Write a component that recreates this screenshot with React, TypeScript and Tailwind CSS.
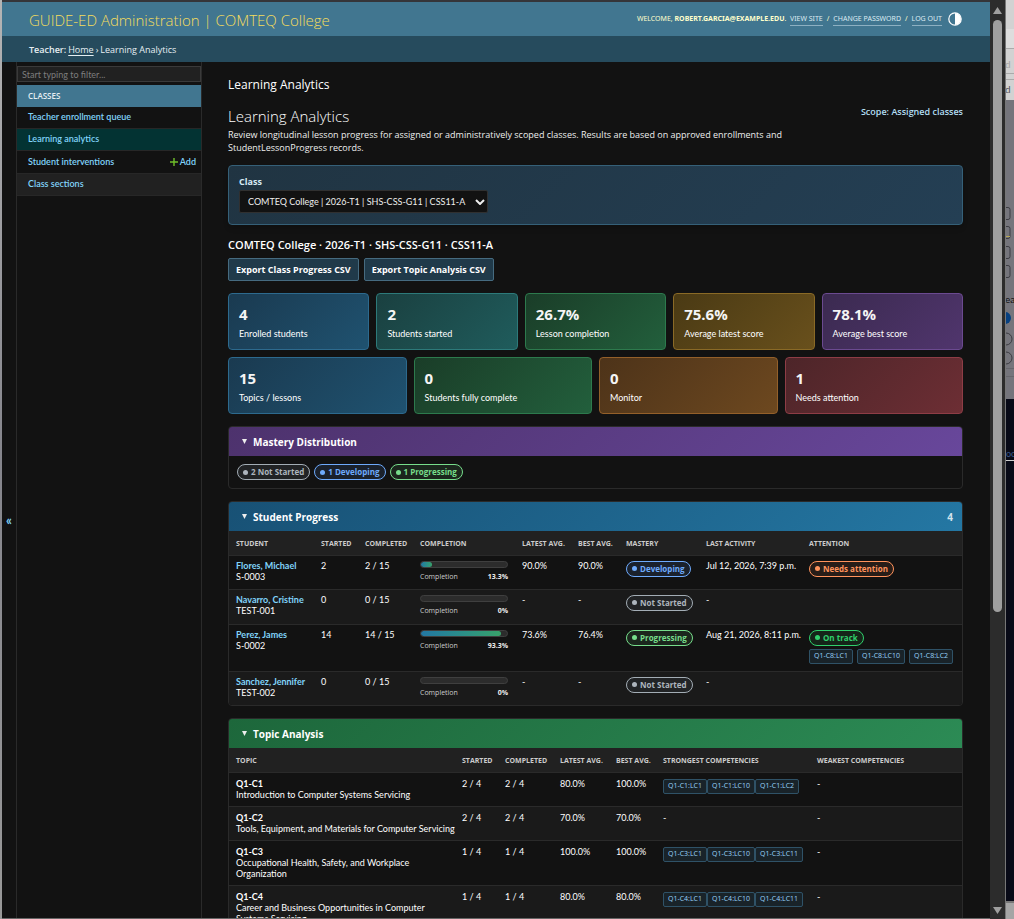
import React from 'react';

type Tone = 'blue' | 'teal' | 'green' | 'gold' | 'purple' | 'orange' | 'red';
type BadgeTone = 'gray' | 'blue' | 'lime' | 'green' | 'orange';

const TONES: Record<Tone, string> = {
    blue: 'border-[#2d6a8e] from-[#1a3a50] to-[#1f5270]',
    teal: 'border-[#2d7a7a] from-[#1a4040] to-[#1f5c5c]',
    green: 'border-[#2d7a4d] from-[#1a3d28] to-[#225f3c]',
    gold: 'border-[#8a6a26] from-[#4a3a14] to-[#69501c]',
    purple: 'border-[#6b4a90] from-[#3b2a50] to-[#50356d]',
    orange: 'border-[#94602a] from-[#4d3319] to-[#6d481f]',
    red: 'border-[#8e3d46] from-[#4d2529] to-[#6d2e34]',
};

const BADGES: Record<BadgeTone, string> = {
    gray: 'border-[#a3adb5] text-[#adb5bd] bg-[#212325]',
    blue: 'border-[#6eaafc] text-[#6eaafc] bg-[#1a212c]',
    lime: 'border-[#77dd8b] text-[#77dd8b] bg-[#1b261d]',
    green: 'border-[#30cf6c] text-[#30cf6c] bg-[#152419]',
    orange: 'border-[#ff935c] text-[#ff935c] bg-[#271d18]',
};

const firstStats: { value: string; label: string; tone: Tone }[] = [
    { value: '4', label: 'Enrolled students', tone: 'blue' },
    { value: '2', label: 'Students started', tone: 'teal' },
    { value: '26.7%', label: 'Lesson completion', tone: 'green' },
    { value: '75.6%', label: 'Average latest score', tone: 'gold' },
    { value: '78.1%', label: 'Average best score', tone: 'purple' },
];

const secondStats: { value: string; label: string; tone: Tone }[] = [
    { value: '15', label: 'Topics / lessons', tone: 'blue' },
    { value: '0', label: 'Students fully complete', tone: 'green' },
    { value: '0', label: 'Monitor', tone: 'orange' },
    { value: '1', label: 'Needs attention', tone: 'red' },
];

const students = [
    { name: 'Flores, Michael', id: 'S-0003', started: 2, percent: 13.3, latest: '90.0%', best: '90.0%', mastery: 'Developing', tone: 'blue' as BadgeTone, last: 'Jul 12, 2026, 7:39 p.m.', attention: 'Needs attention', codes: [] as string[], height: 'h-[34px]' },
    { name: 'Navarro, Cristine', id: 'TEST-001', started: 0, percent: 0, latest: '-', best: '-', mastery: 'Not Started', tone: 'gray' as BadgeTone, last: '-', attention: '', codes: [], height: 'h-[35px]' },
    { name: 'Perez, James', id: 'S-0002', started: 14, percent: 93.3, latest: '73.6%', best: '76.4%', mastery: 'Progressing', tone: 'lime' as BadgeTone, last: 'Aug 21, 2026, 8:11 p.m.', attention: 'On track', codes: ['Q1-C8:LC1', 'Q1-C8:LC10', 'Q1-C8:LC2'], height: 'h-[47px]' },
    { name: 'Sanchez, Jennifer', id: 'TEST-002', started: 0, percent: 0, latest: '-', best: '-', mastery: 'Not Started', tone: 'gray' as BadgeTone, last: '-', attention: '', codes: [], height: 'h-[34px]' },
];

const topics = [
    { code: 'Q1-C1', title: 'Introduction to Computer Systems Servicing', count: '2 / 4', latest: '80.0%', best: '100.0%', strongest: ['Q1-C1:LC1', 'Q1-C1:LC10', 'Q1-C1:LC2'] },
    { code: 'Q1-C2', title: 'Tools, Equipment, and Materials for Computer Servicing', count: '2 / 4', latest: '70.0%', best: '70.0%', strongest: [] },
    { code: 'Q1-C3', title: 'Occupational Health, Safety, and Workplace Organization', count: '1 / 4', latest: '100.0%', best: '100.0%', strongest: ['Q1-C3:LC1', 'Q1-C3:LC10', 'Q1-C3:LC11'] },
    { code: 'Q1-C4', title: 'Career and Business Opportunities in Computer Systems Servicing', count: '1 / 4', latest: '80.0%', best: '80.0%', strongest: ['Q1-C4:LC1', 'Q1-C4:LC10', 'Q1-C4:LC11'] },
];

const OPEN = "font-['Open_Sans','Noto_Sans',sans-serif]";

const StatCard = ({ value, label, tone }: { value: string; label: string; tone: Tone }) => (
    <div className={`h-[57px] rounded-[4px] border bg-linear-135 px-[10px] pt-[10px] ${TONES[tone]}`}>
        <div className={`text-[15px] leading-5 font-bold text-[#f5f5f5] ${OPEN}`}>{value}</div>
        <div className="mt-1 leading-3 text-white">{label}</div>
    </div>
);

const Badge = ({ tone, children }: { tone: BadgeTone; children: React.ReactNode }) => (
    <span className={`inline-flex h-4 items-center gap-[3px] rounded-full border px-[5px] align-top text-[8px] font-bold whitespace-nowrap ${OPEN} ${BADGES[tone]}`}>
        <span className="size-[5px] rounded-full bg-current" />
        {children}
    </span>
);

const Code = ({ children }: { children: React.ReactNode }) => (
    <span className={`inline-flex h-[15px] items-center rounded-[2px] border border-[#2f5267] bg-[#192329] px-1 text-[7px] whitespace-nowrap text-[#9ad4fb] ${OPEN}`}>
        {children}
    </span>
);

const Progress = ({ percent }: { percent: number }) => (
    <div className={OPEN}>
        <div className="h-[7px] overflow-hidden rounded-full border border-[#3f3f3f] bg-[#2c2c2c]">
            <div className="h-full rounded-full bg-linear-to-r from-[#2477a3] to-[#38a169]" style={{ width: `${percent}%` }} />
        </div>
        <div className="mt-1 flex justify-between text-[7px] leading-[10px] text-[#cccccc]">
            <span>Completion</span>
            <strong className="text-[#eeeeee]">{percent}%</strong>
        </div>
    </div>
);

const Panel = ({ title, tone, count, children }: { title: string; tone: string; count?: number; children: React.ReactNode }) => (
    <details open className="mt-3 overflow-hidden rounded-[4px] border border-[#2a2a2a]">
        <summary className={`flex h-[29px] cursor-pointer list-none items-center bg-linear-135 px-[13px] text-[10px] leading-[14px] font-bold text-white ${OPEN} ${tone}`}>
            <svg viewBox="0 0 6 6" className="mr-[6px] size-[5px] fill-[#eeeeee]"><path d="M0 0h6L3 6z" /></svg>
            {title}
            {count !== undefined && <span className="mr-[-4px] ml-auto text-[#d3e4ed]">{count}</span>}
        </summary>
        {children}
    </details>
);

const TH = `px-[7px] pt-[2px] text-left text-[7px] font-bold whitespace-nowrap text-[#cccccc] ${OPEN}`;
const TD = 'px-[7px] pt-[5px] align-top';
const TEXT_TD = 'px-[7px] pt-1 align-top whitespace-nowrap';

// Slice of the window that sits behind the browser, visible along its right edge
const BackWindow = () => (
    <div className="flex w-[9px] shrink-0 flex-col overflow-hidden border-l border-[#777777] bg-[#080a17]">
        <svg width="8" height="399" className="shrink-0" fill="none" stroke="#3c3c42">
            <rect width="8" height="399" fill="#75757c" stroke="none" />
            <rect width="8" height="100" fill="#d2d2d2" stroke="none" />
            <rect width="8" height="19" y="29" fill="#dddddd" stroke="none" />
            <path d="M0 48.500h8M0 73.500h8M0 79.500h8" stroke="#aaaaaa" />
            <text x="-1" y="68" fontSize="10" fill="#a5a5a5" stroke="none">d</text>
            <text x="-1" y="93" fontSize="10" fill="#55555c" stroke="none">d</text>
            <path d="M0 207.500h2a2 2 0 0 1 2 2v8a2 2 0 0 1-2 2H0M0 226.500h2a2 2 0 0 1 2 2v8a2 2 0 0 1-2 2H0M0 246.500h2a2 2 0 0 1 2 2v8a2 2 0 0 1-2 2H0M0 265.500h2a2 2 0 0 1 2 2v8a2 2 0 0 1-2 2H0" />
            <path d="M0 236.500h4" stroke="#b5a655" />
            <text x="-1" y="303" fontSize="10" fill="#111111" stroke="none">ea</text>
            <circle cx="-1" cy="318" r="6" fill="#064080" stroke="none" />
            <path d="M0 333a6 6 0 0 1 0 12M0 352a6 6 0 0 1 0 12" />
            <path d="M0 368.500h8M0 376.500h8" stroke="#66666c" />
        </svg>
        <div className="mt-[49px] border-b border-[#cccccc] text-[9px] leading-3 text-[#3c5a8a]">oc</div>
        <div className="mt-auto h-[18px] border-t-2 border-[#777777] bg-[#a5a5a5]" />
    </div>
);

const App = () => (
    <div className="flex h-screen overflow-hidden bg-linear-to-b from-[#b5b5b5] via-[#85858c] to-[#999999] pl-[2px] font-[Lato,'Noto_Sans',sans-serif] text-[9px] leading-3 text-white">
        <div className="flex min-w-0 flex-1 flex-col border-t-2 border-b border-t-[#353539] border-b-[#666666] bg-[#121212]">
            <header className="flex h-[34px] shrink-0 items-center justify-between bg-[#417690] pr-7 pl-[27px]">
                <h1 className={`pt-[1px] text-[15px] font-light text-[#f5dd5d] ${OPEN}`}>GUIDE-ED Administration | COMTEQ College</h1>
                <div className="flex items-center font-['Noto_Sans',sans-serif] text-[7px] text-[#ffffcc]">
                    <span>WELCOME, <strong>ROBERT.GARCIA@EXAMPLE.EDU</strong>.&nbsp;&nbsp;</span>
                    <a href="#" className="border-b border-[#8db0c2] text-[#dcebf2]">VIEW SITE</a>
                    <span className="px-1">/</span>
                    <a href="#" className="border-b border-[#8db0c2] text-[#dcebf2]">CHANGE PASSWORD</a>
                    <span className="px-1">/</span>
                    <a href="#" className="border-b border-[#8db0c2] text-[#dcebf2]">LOG OUT</a>
                    <button aria-label="Toggle theme" className="ml-[6px]">
                        <svg viewBox="0 0 14 14" className="size-[14px]"><circle cx="7" cy="7" r="6.2" fill="none" stroke="white" strokeWidth="1.2" /><path d="M7 1a6 6 0 0 1 0 12z" fill="white" /></svg>
                    </button>
                </div>
            </header>
            <nav className={`flex h-[26px] shrink-0 items-center gap-[2px] bg-[#264b5d] pt-[1px] pl-[27px] text-[#e5eef2] ${OPEN}`}>
                <span className="font-semibold">Teacher:</span>
                <a href="#" className="underline underline-offset-2">Home</a>
                <span>›</span>
                <span>Learning Analytics</span>
            </nav>
            <div className="flex min-h-0 flex-1">
                <button aria-label="Toggle navigation" className="w-[14px] shrink-0 pt-[60px] text-[13px] font-bold text-[#81d4fa]">«</button>
                <aside className="w-[186px] shrink-0 border-x border-[#2a2a2a] pt-1">
                    <input aria-label="Filter navigation items" placeholder="Start typing to filter..." className="block h-4 w-full border border-[#3a3a3a] bg-[#212121] px-1 text-[9px] outline-none placeholder:text-[#7d7d7d]" />
                    <h2 className={`mt-[3px] flex h-[22px] items-center bg-[#417690] px-[11px] text-[8px] font-semibold text-[#e5eef2] ${OPEN}`}>CLASSES</h2>
                    <ul className="font-semibold text-[#81d4fa]">
                        <li className="flex h-[22px] items-center border-b border-[#272727] px-[11px] pb-[2px]"><a href="#">Teacher enrollment queue</a></li>
                        <li className="flex h-[22px] items-center border-b border-[#272727] bg-[#033333] px-[11px] pb-[2px]"><a href="#">Learning analytics</a></li>
                        <li className="flex h-[23px] items-center justify-between border-b border-[#272727] pr-[5px] pl-[11px]">
                            <a href="#">Student interventions</a>
                            <a href="#" className="flex items-center gap-[2px]">
                                <svg viewBox="0 0 8 8" className="size-2" stroke="#70bf2b" strokeWidth="1.4"><path d="M4 0v8M0 4h8" /></svg>Add
                            </a>
                        </li>
                        <li className="flex h-[22px] items-center border-b border-[#272727] bg-[#212121] px-[11px] pb-[2px]"><a href="#">Class sections</a></li>
                    </ul>
                </aside>
                <main className="min-w-0 flex-1 overflow-hidden pr-[27px] pl-[26px]">
                    <h1 className={`mt-[14px] text-[12px] leading-[18px] ${OPEN}`}>Learning Analytics</h1>
                    <div className="mt-3 flex justify-between">
                        <div className={OPEN}>
                            <h2 className="text-[15px] leading-5 font-light text-white">Learning Analytics</h2>
                            <p className="mt-[2px] max-w-[560px] leading-[13px] text-[#eeeeee]">Review longitudinal lesson progress for assigned or administratively scoped classes. Results are based on approved enrollments and StudentLessonProgress records.</p>
                        </div>
                        <div className={`font-semibold whitespace-nowrap text-[#b3def2] ${OPEN}`}>Scope: Assigned classes</div>
                    </div>
                    <section className="mt-[11px] h-[60px] rounded-[4px] border border-[#356078] bg-linear-135 from-[#203442] to-[#243f54] px-[10px] pt-[10px] shadow-md">
                        <label htmlFor="class" className={`block font-bold text-[#d5eaf5] ${OPEN}`}>Class</label>
                        <div className="relative mt-[2px] w-[249px]">
                            <select id="class" className="block h-[23px] w-full appearance-none rounded-[2px] border border-[#303030] bg-[#121212] px-2 text-[9px] font-normal text-[#eeeeee]">
                                <option>COMTEQ College | 2026-T1 | SHS-CSS-G11 | CSS11-A</option>
                            </select>
                            <svg viewBox="0 0 10 6" className="pointer-events-none absolute top-[9px] right-[3px] h-[6px] w-[10px]" fill="none" stroke="#eeeeee" strokeWidth="2"><path d="M1 1l4 4 4-4" /></svg>
                        </div>
                    </section>
                    <h3 className={`mt-[13px] text-[11px] leading-[14px] font-semibold text-white ${OPEN}`}>COMTEQ College · 2026-T1 · SHS-CSS-G11 · CSS11-A</h3>
                    <div className={`mt-[6px] flex gap-[5px] ${OPEN}`}>
                        <button className="h-[23px] rounded-[2px] border border-[#466b80] bg-[#203a4a] px-[7px] text-[9px] font-bold text-white">Export Class Progress CSV</button>
                        <button className="h-[23px] rounded-[2px] border border-[#466b80] bg-[#203a4a] px-[7px] text-[9px] font-bold text-white">Export Topic Analysis CSV</button>
                    </div>
                    <div className="mt-3 grid grid-cols-5 gap-[7px]">
                        {firstStats.map((s) => <StatCard key={s.label} {...s} />)}
                    </div>
                    <div className="mt-[7px] grid grid-cols-4 gap-[7px]">
                        {secondStats.map((s) => <StatCard key={s.label} {...s} />)}
                    </div>

                    <Panel title="Mastery Distribution" tone="from-[#4d326d] to-[#68479b]">
                        <div className="flex gap-1 px-2 pt-2 pb-2">
                            <Badge tone="gray">2 Not Started</Badge>
                            <Badge tone="blue">1 Developing</Badge>
                            <Badge tone="lime">1 Progressing</Badge>
                        </div>
                    </Panel>

                    <Panel title="Student Progress" tone="from-[#185175] to-[#2477a3]" count={4}>
                        <table className="w-full table-fixed">
                            <colgroup>
                                <col className="w-[85px]" /><col className="w-[44px]" /><col className="w-[55px]" /><col className="w-[102px]" /><col className="w-[56px]" /><col className="w-[48px]" /><col className="w-[80px]" /><col className="w-[103px]" /><col />
                            </colgroup>
                            <thead>
                                <tr className="h-6 border-b border-[#2a2a2a] bg-[#212121]">
                                    {['STUDENT', 'STARTED', 'COMPLETED', 'COMPLETION', 'LATEST AVG.', 'BEST AVG.', 'MASTERY', 'LAST ACTIVITY', 'ATTENTION'].map((h) => <th key={h} className={TH}>{h}</th>)}
                                </tr>
                            </thead>
                            <tbody>
                                {students.map((s) => (
                                    <tr key={s.id} className={`border-b border-[#2a2a2a] last:border-0 even:bg-[#1a1a1a] ${s.height}`}>
                                        <td className={`${TEXT_TD} leading-[11px]`}><a href="#" className="block font-bold text-[#81d4fa]">{s.name}</a>{s.id}</td>
                                        <td className={TEXT_TD}>{s.started}</td>
                                        <td className={TEXT_TD}>{s.started} / 15</td>
                                        <td className={TD}><Progress percent={s.percent} /></td>
                                        <td className={TEXT_TD}>{s.latest}</td>
                                        <td className={TEXT_TD}>{s.best}</td>
                                        <td className={TD}><Badge tone={s.tone}>{s.mastery}</Badge></td>
                                        <td className={TEXT_TD}>{s.last}</td>
                                        <td className={TD}>
                                            {s.attention && <Badge tone={s.codes.length ? 'green' : 'orange'}>{s.attention}</Badge>}
                                            {s.codes.length > 0 && <div className="mt-[3px] flex gap-1">{s.codes.map((c) => <Code key={c}>{c}</Code>)}</div>}
                                        </td>
                                    </tr>
                                ))}
                            </tbody>
                        </table>
                    </Panel>

                    <Panel title="Topic Analysis" tone="from-[#1d673b] to-[#2c8b55]">
                        <table className="w-full table-fixed">
                            <colgroup>
                                <col className="w-[226px]" /><col className="w-[43px]" /><col className="w-[55px]" /><col className="w-[56px]" /><col className="w-[47px]" /><col className="w-[154px]" /><col />
                            </colgroup>
                            <thead>
                                <tr className="h-6 border-b border-[#2a2a2a] bg-[#212121]">
                                    {['TOPIC', 'STARTED', 'COMPLETED', 'LATEST AVG.', 'BEST AVG.', 'STRONGEST COMPETENCIES', 'WEAKEST COMPETENCIES'].map((h) => <th key={h} className={TH}>{h}</th>)}
                                </tr>
                            </thead>
                            <tbody>
                                {topics.map((t) => (
                                    <tr key={t.code} className="h-[34px] border-b border-[#2a2a2a] even:bg-[#1a1a1a]">
                                        <td className="pt-[5px] pb-[6px] pl-[7px] align-top leading-[11px]">
                                            <div className="-mr-[2px]"><strong className="block font-bold text-white">{t.code}</strong>{t.title}</div>
                                        </td>
                                        <td className={TD}>{t.count}</td>
                                        <td className={TD}>{t.count}</td>
                                        <td className={TD}>{t.latest}</td>
                                        <td className={TD}>{t.best}</td>
                                        <td className={TD}>{t.strongest.length ? <div className="flex pt-[1px]">{t.strongest.map((c) => <Code key={c}>{c}</Code>)}</div> : '-'}</td>
                                        <td className={TD}>-</td>
                                    </tr>
                                ))}
                            </tbody>
                        </table>
                    </Panel>
                </main>
            </div>
        </div>
        <div className="flex w-[15px] shrink-0 flex-col items-center bg-[#2c2c2c] pt-[7px] pb-[5px]">
            <svg viewBox="0 0 9 7" className="h-[7px] w-[9px]" fill="#9f9f9f"><path d="M4.500 0L9 7H0z" /></svg>
            <div className="mt-[6px] w-[9px] flex-[592] rounded-full bg-[#9f9f9f]" />
            <div className="flex-[295]" />
            <svg viewBox="0 0 9 7" className="h-[7px] w-[9px]" fill="#9f9f9f"><path d="M0 0h9L4.500 7z" /></svg>
        </div>
        <BackWindow />
    </div>
);

export default App;
